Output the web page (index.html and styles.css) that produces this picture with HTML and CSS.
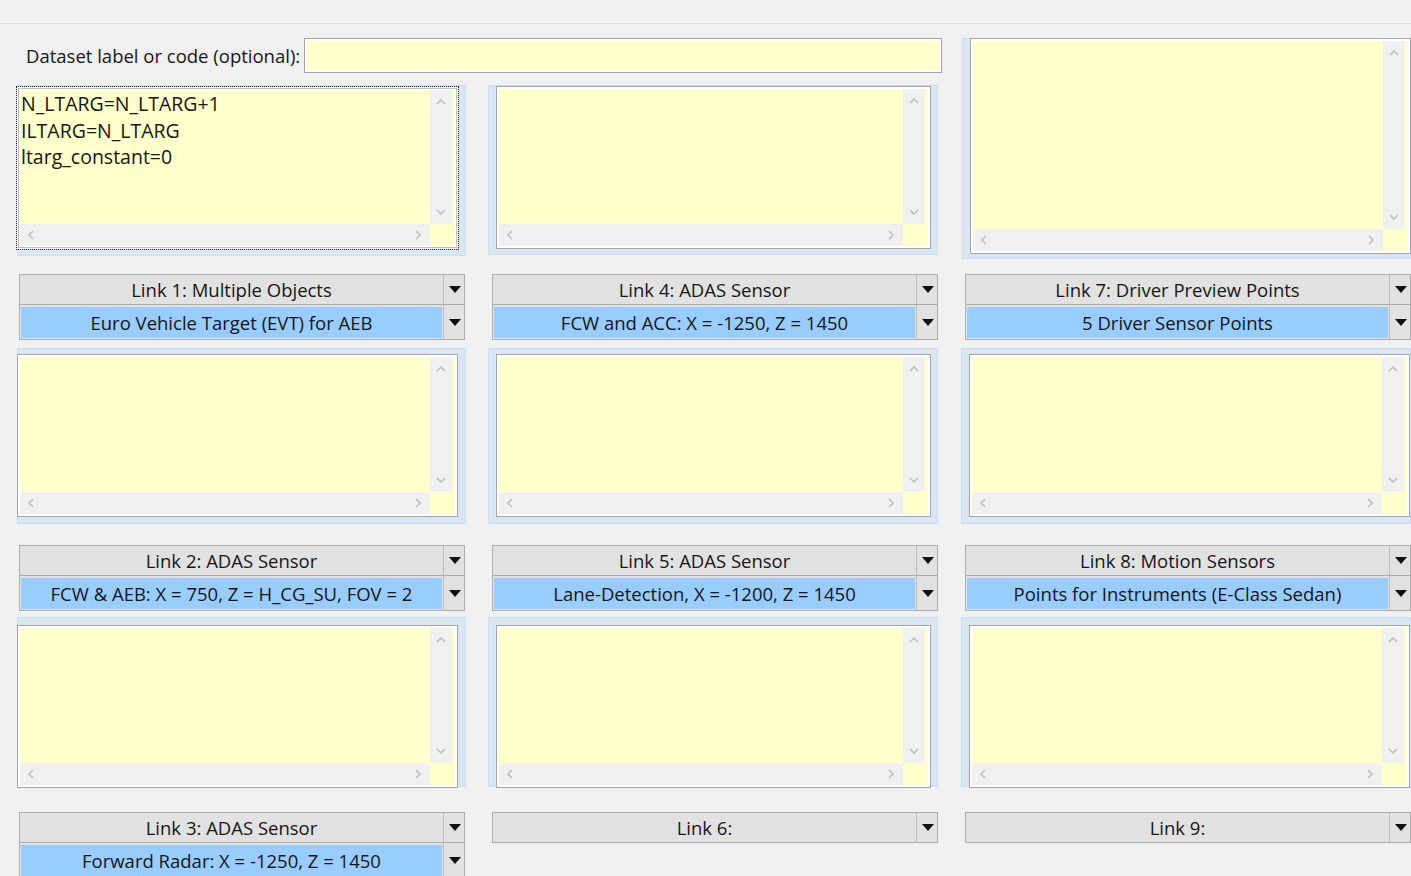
FILE: index.html
```html
<!DOCTYPE html>
<html lang="en">
<head>
<meta charset="utf-8">
<title>Links</title>
<link rel="stylesheet" href="styles.css">
</head>
<body>
<div class="topbar"></div>
<main class="page">
  <section class="top-block">
    <div class="top-left">
      <div class="header">
        <label class="header-label">Dataset label or code (optional):</label>
        <div class="input"><div class="input-in"></div></div>
      </div>
      <div class="row panel-row r1">
        <div class="panel c1">
          <div class="ta focus">
            <div class="ta-in">
              <div class="ta-text">N_LTARG=N_LTARG+1<br>ILTARG=N_LTARG<br>ltarg_constant=0</div>
              <div class="vs"><svg class="chev" viewBox="0 0 10 6"><polyline points="1,5 5,1 9,5"/></svg><svg class="chev" viewBox="0 0 10 6"><polyline points="1,1 5,5 9,1"/></svg></div>
              <div class="hs"><svg class="chev h" viewBox="0 0 6 10"><polyline points="5,1 1,5 5,9"/></svg><svg class="chev h" viewBox="0 0 6 10"><polyline points="1,1 5,5 1,9"/></svg></div>
              <div class="corner"></div>
            </div>
          </div>
        </div>
        <div class="panel c2">
          <div class="ta">
            <div class="ta-in">
              <div class="ta-text"></div>
              <div class="vs"><svg class="chev" viewBox="0 0 10 6"><polyline points="1,5 5,1 9,5"/></svg><svg class="chev" viewBox="0 0 10 6"><polyline points="1,1 5,5 9,1"/></svg></div>
              <div class="hs"><svg class="chev h" viewBox="0 0 6 10"><polyline points="5,1 1,5 5,9"/></svg><svg class="chev h" viewBox="0 0 6 10"><polyline points="1,1 5,5 1,9"/></svg></div>
              <div class="corner"></div>
            </div>
          </div>
        </div>
      </div>
    </div>
    <div class="panel c3 tall">
      <div class="ta">
        <div class="ta-in">
          <div class="ta-text"></div>
          <div class="vs"><svg class="chev" viewBox="0 0 10 6"><polyline points="1,5 5,1 9,5"/></svg><svg class="chev" viewBox="0 0 10 6"><polyline points="1,1 5,5 9,1"/></svg></div>
          <div class="hs"><svg class="chev h" viewBox="0 0 6 10"><polyline points="5,1 1,5 5,9"/></svg><svg class="chev h" viewBox="0 0 6 10"><polyline points="1,1 5,5 1,9"/></svg></div>
          <div class="corner"></div>
        </div>
      </div>
    </div>
  </section>

  <section class="row combo-row-set cr1">
    <div class="combo">
      <div class="cb head"><span class="cb-text">Link 1: Multiple Objects</span><span class="cb-btn"><i class="tri"></i></span></div>
      <div class="cb sel"><span class="cb-text">Euro Vehicle Target (EVT) for AEB</span><span class="cb-btn"><i class="tri"></i></span></div>
    </div>
    <div class="combo">
      <div class="cb head"><span class="cb-text">Link 4: ADAS Sensor</span><span class="cb-btn"><i class="tri"></i></span></div>
      <div class="cb sel"><span class="cb-text">FCW and ACC: X = -1250, Z = 1450</span><span class="cb-btn"><i class="tri"></i></span></div>
    </div>
    <div class="combo">
      <div class="cb head"><span class="cb-text">Link 7: Driver Preview Points</span><span class="cb-btn"><i class="tri"></i></span></div>
      <div class="cb sel"><span class="cb-text">5 Driver Sensor Points</span><span class="cb-btn"><i class="tri"></i></span></div>
    </div>
  </section>

  <section class="row panel-row r2">
    <div class="panel c1">
      <div class="ta"><div class="ta-in"><div class="ta-text"></div>
        <div class="vs"><svg class="chev" viewBox="0 0 10 6"><polyline points="1,5 5,1 9,5"/></svg><svg class="chev" viewBox="0 0 10 6"><polyline points="1,1 5,5 9,1"/></svg></div>
        <div class="hs"><svg class="chev h" viewBox="0 0 6 10"><polyline points="5,1 1,5 5,9"/></svg><svg class="chev h" viewBox="0 0 6 10"><polyline points="1,1 5,5 1,9"/></svg></div>
        <div class="corner"></div></div></div>
    </div>
    <div class="panel c2">
      <div class="ta"><div class="ta-in"><div class="ta-text"></div>
        <div class="vs"><svg class="chev" viewBox="0 0 10 6"><polyline points="1,5 5,1 9,5"/></svg><svg class="chev" viewBox="0 0 10 6"><polyline points="1,1 5,5 9,1"/></svg></div>
        <div class="hs"><svg class="chev h" viewBox="0 0 6 10"><polyline points="5,1 1,5 5,9"/></svg><svg class="chev h" viewBox="0 0 6 10"><polyline points="1,1 5,5 1,9"/></svg></div>
        <div class="corner"></div></div></div>
    </div>
    <div class="panel c3">
      <div class="ta"><div class="ta-in"><div class="ta-text"></div>
        <div class="vs"><svg class="chev" viewBox="0 0 10 6"><polyline points="1,5 5,1 9,5"/></svg><svg class="chev" viewBox="0 0 10 6"><polyline points="1,1 5,5 9,1"/></svg></div>
        <div class="hs"><svg class="chev h" viewBox="0 0 6 10"><polyline points="5,1 1,5 5,9"/></svg><svg class="chev h" viewBox="0 0 6 10"><polyline points="1,1 5,5 1,9"/></svg></div>
        <div class="corner"></div></div></div>
    </div>
  </section>

  <section class="row combo-row-set cr2">
    <div class="combo">
      <div class="cb head"><span class="cb-text">Link 2: ADAS Sensor</span><span class="cb-btn"><i class="tri"></i></span></div>
      <div class="cb sel"><span class="cb-text">FCW &amp; AEB: X = 750, Z = H_CG_SU, FOV = 2</span><span class="cb-btn"><i class="tri"></i></span></div>
    </div>
    <div class="combo">
      <div class="cb head"><span class="cb-text">Link 5: ADAS Sensor</span><span class="cb-btn"><i class="tri"></i></span></div>
      <div class="cb sel"><span class="cb-text">Lane-Detection, X = -1200, Z = 1450</span><span class="cb-btn"><i class="tri"></i></span></div>
    </div>
    <div class="combo">
      <div class="cb head"><span class="cb-text">Link 8: Motion Sensors</span><span class="cb-btn"><i class="tri"></i></span></div>
      <div class="cb sel"><span class="cb-text">Points for Instruments (E-Class Sedan)</span><span class="cb-btn"><i class="tri"></i></span></div>
    </div>
  </section>

  <section class="row panel-row r3">
    <div class="panel c1">
      <div class="ta"><div class="ta-in"><div class="ta-text"></div>
        <div class="vs"><svg class="chev" viewBox="0 0 10 6"><polyline points="1,5 5,1 9,5"/></svg><svg class="chev" viewBox="0 0 10 6"><polyline points="1,1 5,5 9,1"/></svg></div>
        <div class="hs"><svg class="chev h" viewBox="0 0 6 10"><polyline points="5,1 1,5 5,9"/></svg><svg class="chev h" viewBox="0 0 6 10"><polyline points="1,1 5,5 1,9"/></svg></div>
        <div class="corner"></div></div></div>
    </div>
    <div class="panel c2">
      <div class="ta"><div class="ta-in"><div class="ta-text"></div>
        <div class="vs"><svg class="chev" viewBox="0 0 10 6"><polyline points="1,5 5,1 9,5"/></svg><svg class="chev" viewBox="0 0 10 6"><polyline points="1,1 5,5 9,1"/></svg></div>
        <div class="hs"><svg class="chev h" viewBox="0 0 6 10"><polyline points="5,1 1,5 5,9"/></svg><svg class="chev h" viewBox="0 0 6 10"><polyline points="1,1 5,5 1,9"/></svg></div>
        <div class="corner"></div></div></div>
    </div>
    <div class="panel c3">
      <div class="ta"><div class="ta-in"><div class="ta-text"></div>
        <div class="vs"><svg class="chev" viewBox="0 0 10 6"><polyline points="1,5 5,1 9,5"/></svg><svg class="chev" viewBox="0 0 10 6"><polyline points="1,1 5,5 9,1"/></svg></div>
        <div class="hs"><svg class="chev h" viewBox="0 0 6 10"><polyline points="5,1 1,5 5,9"/></svg><svg class="chev h" viewBox="0 0 6 10"><polyline points="1,1 5,5 1,9"/></svg></div>
        <div class="corner"></div></div></div>
    </div>
  </section>

  <section class="row combo-row-set cr3">
    <div class="combo">
      <div class="cb head"><span class="cb-text">Link 3: ADAS Sensor</span><span class="cb-btn"><i class="tri"></i></span></div>
      <div class="cb sel"><span class="cb-text">Forward Radar: X = -1250, Z = 1450</span><span class="cb-btn"><i class="tri"></i></span></div>
    </div>
    <div class="combo">
      <div class="cb head"><span class="cb-text">Link 6:</span><span class="cb-btn"><i class="tri"></i></span></div>
    </div>
    <div class="combo">
      <div class="cb head"><span class="cb-text">Link 9:</span><span class="cb-btn"><i class="tri"></i></span></div>
    </div>
  </section>
</main>
</body>
</html>
```

FILE: styles.css
```css
* { box-sizing: border-box; }

html, body {
  margin: 0;
  padding: 0;
  background: #f0f0f0;
  overflow: hidden;
}

body {
  width: 1411px;
  height: 876px;
  font-family: "Open Sans", "Noto Sans", "Liberation Sans", sans-serif;
  font-size: 18.5px;
  color: #161616;
}

.topbar {
  height: 24px;
  border-bottom: 1px solid #d9d9d9;
  background: #f0f0f0;
}

.page {
  padding-left: 16px;
  width: 1430px;
}

.row {
  display: flex;
  gap: 23px;
}

/* top block: header + first panels on the left, tall panel on the right */
.top-block {
  display: flex;
  gap: 23px;
  margin-top: 14px;
  align-items: flex-start;
}

.top-left {
  width: 923px;
  display: flex;
  flex-direction: column;
}

.header {
  display: flex;
  align-items: center;
  height: 35px;
  width: 926px;
}

.header-label {
  margin-left: 10px;
  white-space: nowrap;
  margin-right: 4px;
}

.input {
  flex: 1;
  height: 35px;
  border: 1px solid #a3a3a3;
  background: #fff;
  padding: 2px;
}

.input-in {
  height: 100%;
  background: #ffffcc;
}

/* panels */
.panel {
  width: 450px;
  background: #d9e5f1;
  border: 1px solid #c9dcf0;
  flex: none;
}

.panel.c1 { margin-left: 1px; width: 449px; }
.panel.c2 { margin-left: -1px; }

.panel .ta { height: 163px; }
.panel.c1 .ta { width: 441px; margin-left: -1px; }
.panel.c2 .ta, .panel.c3 .ta { width: 435px; margin-left: 7px; }
.panel.c3 .ta { width: 441px; }

.r1 { margin-top: 12px; }
.r1 .panel.c1 { height: 171px; }
.r1 .panel.c1 .ta { margin-top: 1px; height: 162px; }
.r1 .panel.c2 { height: 170px; }
.r1 .panel.c2 .ta { margin-top: 0; }

.panel.tall { height: 221px; }
.panel.tall .ta { height: 216px; margin-top: -1px; }

.r2 { margin-top: 8px; }
.r2 .panel { height: 176px; }
.r2 .panel .ta { margin-top: 5px; }

.r3 { margin-top: 6px; }
.r3 .panel { height: 170px; }
.r3 .panel .ta { margin-top: 7px; }

/* fake textarea */
.ta {
  border: 1px solid #a5a5a5;
  background: #fff;
  padding: 2px;
}

.ta.focus {
  border-color: #fff;
  outline: 1px dotted #1e1e1e;
  outline-offset: 0;
  box-shadow: inset 0 0 0 1px #bdbdbd;
}

.ta-in {
  height: 100%;
  background: #ffffcc;
  display: grid;
  grid-template-columns: 1fr 22px;
  grid-template-rows: 1fr 22px;
  padding-right: 3px;
}

.ta-text {
  padding: 1px 0 0 1px;
  font-size: 19.5px;
  line-height: 26.5px;
  white-space: nowrap;
  overflow: hidden;
}

.vs {
  background: #f0f0f0;
  display: flex;
  flex-direction: column;
  justify-content: space-between;
  align-items: center;
  padding: 9px 0 9px;
}

.hs {
  background: #f0f0f0;
  display: flex;
  justify-content: space-between;
  align-items: center;
  padding: 0 9px 0 8px;
}

.corner { background: #ffffcc; }

.chev {
  width: 10px;
  height: 6px;
  fill: none;
  stroke: #bfbfbf;
  stroke-width: 1.6;
  display: block;
}

.chev.h {
  width: 6px;
  height: 10px;
}

/* combos */
.cr1 { margin-top: 15px; }
.cr2 { margin-top: 21px; }
.cr3 { margin-top: 25px; }

.combo {
  width: 446px;
  margin-left: 3px;
  margin-right: 1px;
  flex: none;
}

.cb {
  display: flex;
  border: 1px solid #adadad;
  background: #e1e1e1;
}

.cb.head { height: 31px; }

.cb.sel {
  height: 35px;
  border-top: none;
  padding: 2px 0 1px 1px;
}

.cb-text {
  flex: 1;
  display: flex;
  align-items: center;
  justify-content: center;
  white-space: nowrap;
  padding-bottom: 1px;
}

.cb.sel .cb-text {
  background: #99ccff;
  margin-right: 1px;
}

.cb-btn {
  width: 21px;
  flex: none;
  border-left: 1px solid #bcbcbc;
  display: flex;
  align-items: center;
  justify-content: center;
}

.cb.sel .cb-btn { margin-top: -2px; margin-bottom: -1px; }

.tri {
  width: 0;
  height: 0;
  border-left: 6px solid transparent;
  border-right: 6px solid transparent;
  border-top: 7px solid #111;
  margin-left: 1px;
}
```
